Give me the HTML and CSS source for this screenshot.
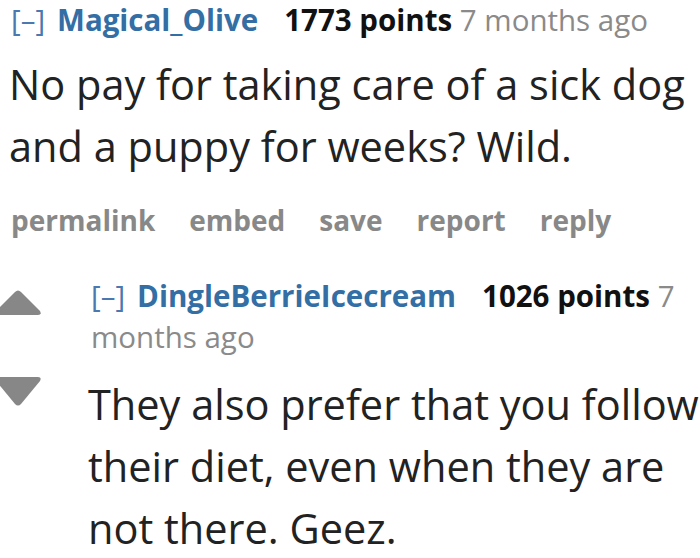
FILE: index.html
```html
<!DOCTYPE html>
<html>
<head>
<meta charset="utf-8">
<link rel="stylesheet" href="styles.css">
</head>
<body>
<div class="thread">
  <div class="comment top">
    <div class="tagline">
      <span class="expand">[–]</span><span class="author">Magical_Olive</span><span class="score">1773 points</span> <span class="time">7</span> <span class="time">months ago</span>
    </div>
    <div class="md">No pay for taking care of a sick dog and a puppy for weeks? Wild.</div>
    <ul class="buttons">
      <li>permalink</li>
      <li>embed</li>
      <li>save</li>
      <li>report</li>
      <li>reply</li>
    </ul>
  </div>
  <div class="comment child">
    <div class="votes">
      <svg class="arrow up" viewBox="0 0 48 26" width="48" height="26"><path d="M21 2 Q24 -1 27 2 L46 21 Q48 25 44 25 L4 25 Q0 25 2 21 Z" fill="#878787"/></svg>
      <svg class="arrow down" viewBox="0 0 48 29" width="48" height="29"><path d="M4 0 L44 0 Q48 0 46 4 L27 27 Q24 30 21 27 L2 4 Q0 0 4 0 Z" fill="#878787"/></svg>
    </div>
    <div class="entry">
      <div class="tagline wrap">
        <span class="expand">[–]</span><span class="author">DingleBerrieIcecream</span><span class="score">1026 points</span> <span class="time">7</span> <span class="time">months ago</span>
      </div>
      <div class="md">They also prefer that you follow their diet, even when they are not there. Geez.</div>
    </div>
  </div>
</div>
</body>
</html>
```
FILE: styles.css
```css
html, body {
  margin: 0;
  padding: 0;
  background: #ffffff;
}
body {
  font-family: "Open Sans", "Noto Sans", sans-serif;
  color: #222222;
  width: 700px;
  height: 558px;
  overflow: hidden;
}
.thread {
  display: flex;
  flex-direction: column;
}
.comment.top {
  padding-left: 11px;
}
.tagline {
  font-size: 29.5px;
  line-height: 40px;
  white-space: nowrap;
}
.tagline.wrap {
  white-space: normal;
  line-height: 41px;
}
.expand {
  color: #4a78b0;
  margin-right: 12px;
  font-weight: 400;
}
.author {
  color: #336ea5;
  font-weight: 700;
  margin-right: 26px;
}
.score {
  color: #111111;
  font-weight: 700;
}
.time {
  color: #8a8a8a;
  white-space: nowrap;
}
.md {
  font-size: 41.5px;
  line-height: 62px;
  margin-top: 13px;
  color: #222222;
}
.top .md {
  margin-left: -2px;
}
.buttons {
  list-style: none;
  margin: 25px 0 0 0;
  padding: 0;
  display: flex;
  gap: 34px;
  font-size: 28px;
  line-height: 36px;
  font-weight: 700;
  color: #888888;
}
.comment.child {
  display: flex;
  margin-top: 37px;
}
.votes {
  width: 90px;
  flex: none;
  display: flex;
  flex-direction: column;
  padding-top: 15px;
  margin-left: -6px;
  margin-right: 4px;
}
.arrow {
  display: block;
}
.arrow.down {
  margin-top: 61px;
}
.entry {
  flex: 1;
  min-width: 0;
}
.child .tagline {
  padding-left: 3px;
}
.child .md {
  margin-top: 16px;
}
```
